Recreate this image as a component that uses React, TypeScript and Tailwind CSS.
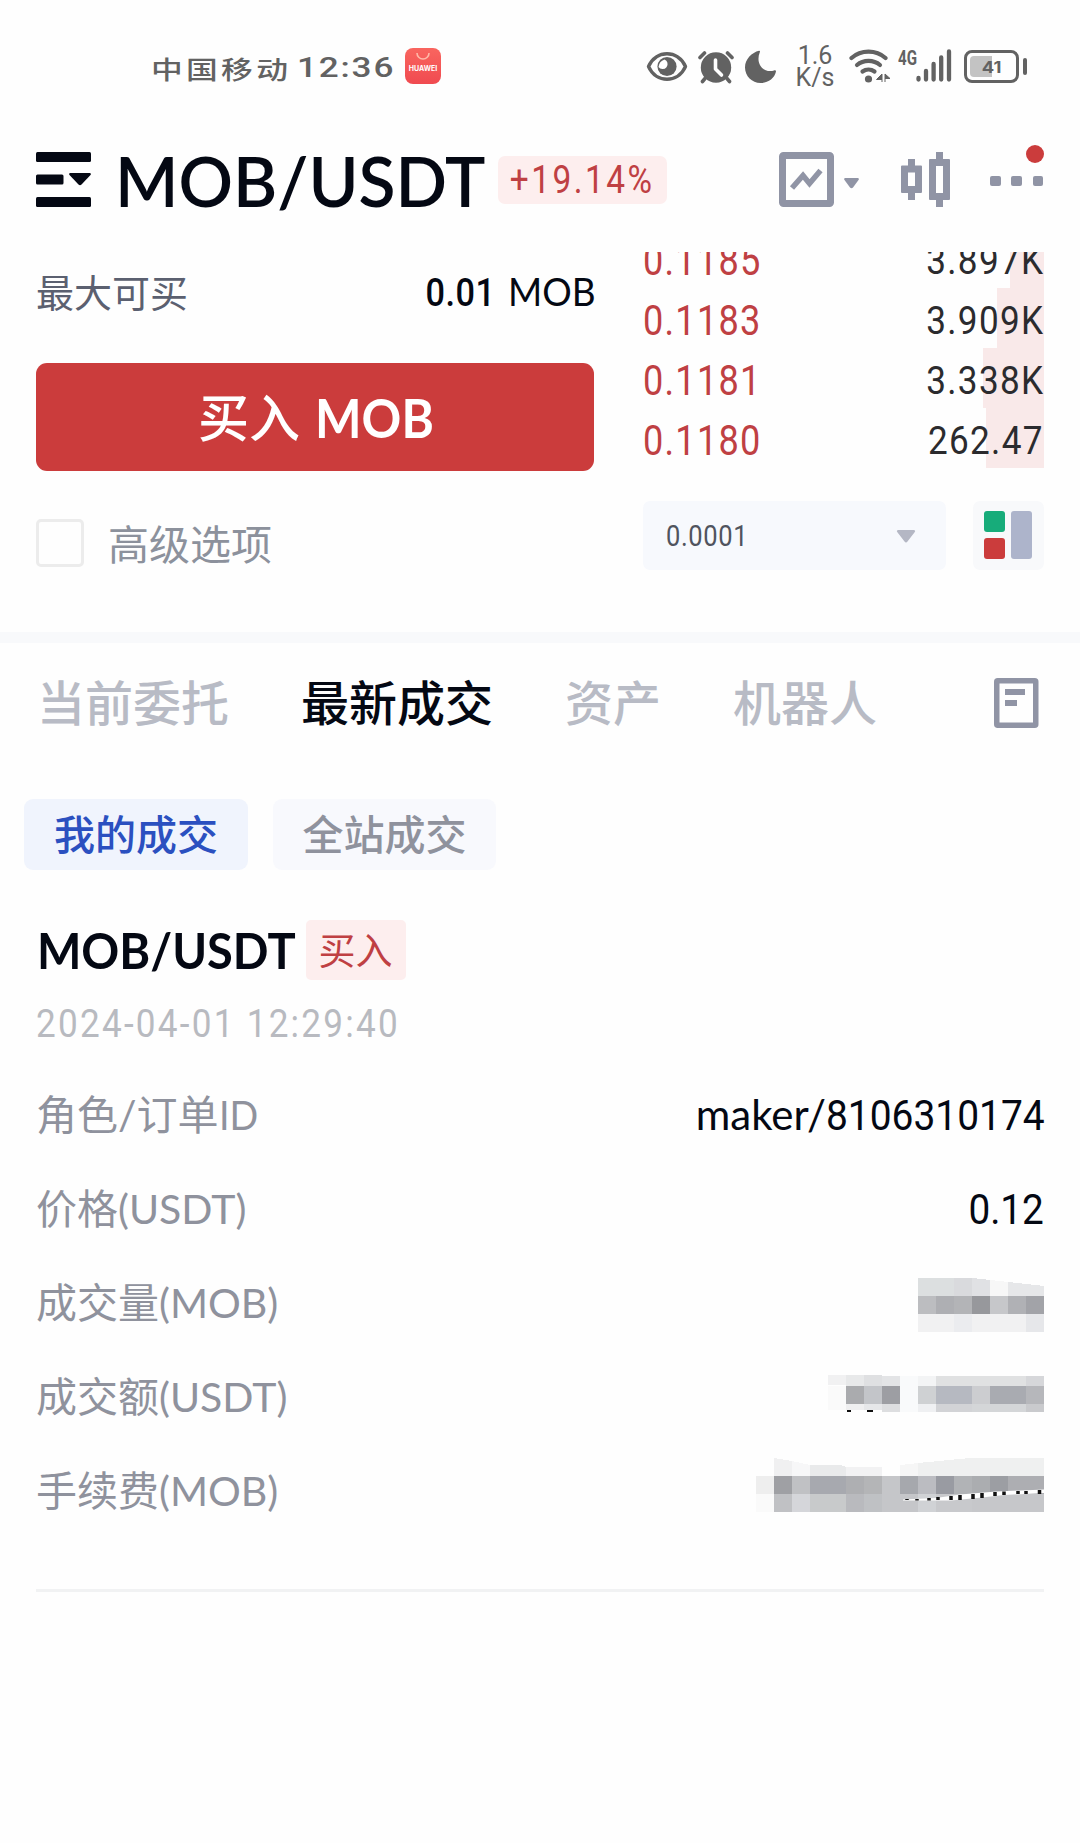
import React from "react";

const asks = [
  { price: "0.1185", amount: "3.897K", bar: "w-[34px]" },
  { price: "0.1183", amount: "3.909K", bar: "w-[47px]" },
  { price: "0.1181", amount: "3.338K", bar: "w-[61px]" },
  { price: "0.1180", amount: "262.47", bar: "w-[58px]" },
];

type Block = [x: number, y: number, w: number, h: number, fill: string];

// Pixelated cells that hide the three private amounts; x and y are inside a 306x94 row.
const volumeBlocks: Block[] = [
  [180, 40, 18, 18, "#bcbdc0"], [198, 40, 18, 18, "#aeafb3"], [216, 40, 18, 18, "#b3b4b7"],
  [234, 40, 18, 18, "#97989c"], [252, 40, 18, 18, "#c6c7ca"], [270, 40, 18, 18, "#b0b1b5"], [288, 40, 18, 18, "#a2a3a8"],
  [180, 58, 36, 18, "#f1f1f2"], [216, 58, 18, 18, "#ebecef"], [234, 58, 54, 18, "#f1f1f2"], [288, 58, 18, 18, "#e6e7ea"],
];
const turnoverBlocks: Block[] = [
  [90, 25, 18, 10, "#f1f1f2"], [108, 25, 18, 11, "#e8e9ea"], [126, 25, 18, 11, "#dfe0e2"], [144, 26, 18, 10, "#e3e4e6"],
  [108, 36, 18, 18, "#aaabae"], [126, 36, 18, 18, "#c3c5c9"], [144, 36, 18, 18, "#9d9ea3"],
  [90, 36, 18, 24, "#fafafa"], [108, 54, 18, 6, "#efeff0"], [126, 54, 18, 6, "#e6e7e9"], [144, 54, 18, 8, "#dddee0"],
  [162, 26, 18, 36, "#f9fafb"], [180, 26, 18, 10, "#f3f4f5"], [180, 36, 18, 18, "#cfd1d3"], [180, 54, 18, 8, "#eff0f2"],
  [198, 26, 90, 10, "#e0e1e2"], [288, 26, 18, 10, "#d6d7da"],
  [198, 36, 36, 18, "#b6b9c1"], [234, 36, 18, 18, "#cccdd0"], [252, 36, 36, 18, "#a9abb1"], [288, 36, 18, 18, "#b6b7bb"],
  [198, 54, 36, 8, "#d2d3d6"], [234, 54, 54, 8, "#d4d6d8"], [288, 54, 18, 8, "#c9cacd"],
];
const feeBlocks: Block[] = [
  [18, 32, 18, 18, "#eeeeee"], [36, 32, 18, 18, "#9fa0a4"], [54, 32, 18, 18, "#c0c1c4"], [72, 32, 36, 18, "#a7a9af"],
  [108, 32, 18, 18, "#aeafb2"], [126, 32, 18, 18, "#b4b5b7"], [144, 32, 18, 18, "#c5c6c9"], [162, 32, 18, 18, "#a6a8ad"],
  [180, 32, 18, 18, "#bbbcc1"], [198, 32, 18, 18, "#999ba2"], [216, 32, 18, 18, "#b1b3b6"], [234, 32, 18, 18, "#abadb0"],
  [252, 32, 18, 18, "#9c9ea3"], [270, 32, 36, 18, "#adaeb2"],
  [18, 50, 18, 18, "#fafafa"], [36, 50, 18, 18, "#c0c1c4"], [54, 50, 18, 18, "#d5d6da"], [72, 50, 36, 18, "#c8cacb"],
  [108, 50, 18, 18, "#b9babe"], [126, 50, 18, 18, "#bfc1c4"], [144, 50, 36, 18, "#c5c6c9"],
  [180, 50, 18, 18, "#d0d2d5"], [198, 50, 36, 18, "#c8c9cc"], [234, 50, 72, 18, "#c6c7ca"],
];

// Remains of the digits along the lower edge of the fee cells: centre x, top y, height.
const dashes = [
  [169, 55, 1], [179, 55, 1.5], [191, 54, 2.5], [200, 53, 3], [213, 52, 4], [222, 51, 5],
  [235, 50, 5], [244, 49, 5], [257, 48, 4], [266, 47.5, 3.5], [280, 47, 3], [288, 47, 3], [301.500, 46, 4],
];

function Mosaic({ blocks, children }: { blocks: Block[]; children?: React.ReactNode }) {
  return (
    <svg width="306" height="94" viewBox="0 0 306 94" shapeRendering="crispEdges">
      {blocks.map(([x, y, w, h, fill], i) => (
        <rect key={i} x={x} y={y} width={w} height={h} fill={fill} />
      ))}
      {children}
    </svg>
  );
}

function StatusBar() {
  return (
    <div className="flex h-[108px] items-start pt-[25px] pr-[53px] pl-[151px] text-[#626262]">
      <div className="flex h-[83px] w-full items-start">
        <div className="flex h-[83px] w-[254px] items-start">
          <span className="mt-[25px] w-[146px] origin-left scale-x-[1.27] text-[25px] leading-[38px] font-medium tracking-[2.600px] whitespace-nowrap">中国移动</span>
          <span className="mt-[24px] origin-left scale-x-[1.3] font-[Roboto] text-[27px] leading-[38px] font-medium tracking-[1.400px]">12:36</span>
        </div>
        <div className="mt-[23px] flex h-[36px] w-[36px] flex-col items-center rounded-[8px] bg-linear-to-b from-[#f9655f] to-[#f04a50]">
          <svg width="16" height="10" viewBox="0 0 16 10" className="mt-[4px]" fill="none" stroke="#ffb9a8" strokeWidth="1.6">
            <path d="M2 1a6 6 0 0 0 12 0" />
          </svg>
          <span className="font-[Inter] text-[7px] leading-[14px] font-bold text-white">HUAWEI</span>
        </div>
        <div className="ml-auto flex h-[83px] items-start">
          <svg width="42" height="33" viewBox="0 0 42 33" className="mt-[25px]">
            <path d="M2.500 16.500C10 -.5 32 -.5 39.500 16.500C32 33.500 10 33.500 2.500 16.500Z" fill="none" stroke="#626262" strokeWidth="3.400" strokeLinejoin="round" />
            <circle cx="21" cy="16.500" r="9.600" fill="#626262" />
            <path d="M18.500 9.500a5 5 0 1 1-6 7.500a9 9 0 0 1 6-7.500Z" fill="#fff" />
          </svg>
          <svg width="36" height="34" viewBox="0 0 36 34" className="mt-[25px] ml-[10px]">
            <circle cx="18" cy="17.500" r="15.200" fill="#626262" />
            <path d="M2 7.500L6.500 3M34 7.500L29.500 3" stroke="#626262" strokeWidth="3.600" strokeLinecap="round" />
            <path d="M7 28.500L4.500 31.500M29 28.500L31.500 31.500" stroke="#626262" strokeWidth="3.600" strokeLinecap="round" />
            <path d="M17.500 10V19L23.500 25" fill="none" stroke="#fff" strokeWidth="3.600" strokeLinecap="round" strokeLinejoin="round" />
          </svg>
          <svg width="32" height="34" viewBox="0 0 32 34" className="mt-[25px] ml-[11px]">
            <path d="M14 .8C7 2.500 0 9 0 17.500C0 26 7 33 15.500 33C23 33 29.500 28.500 31 21.500C31 20.500 30 20 29 20.500C19 23.500 10 14 14.800 2.300C15.200 1.300 15 .6 14 .8Z" fill="#626262" />
          </svg>
          <div className="mt-[20px] ml-[15px] flex w-[46px] flex-col items-center font-[Roboto] text-[25px] leading-[22px]">
            <span>1.6</span>
            <span>K/s</span>
          </div>
          <svg width="42" height="34" viewBox="0 0 42 34" className="mt-[24px] ml-[11px]">
            <g fill="none" stroke="#626262" strokeWidth="4.200" strokeLinecap="round">
              <path d="M2.500 9C12 .5 27 .5 36.500 9" />
              <path d="M8 16C14.500 10.500 24.500 10.500 31 16" />
              <path d="M13.500 22.500C17 20 22 20 25.500 22.500" />
            </g>
            <circle cx="19.500" cy="30" r="3.600" fill="#626262" />
            <path d="M33 25V33M33 25L27.500 30.500H33M36 33V25L41 29.500H36" fill="#626262" stroke="#626262" strokeWidth="1" />
          </svg>
          <span className="mt-[24px] ml-[7px] w-[18px] origin-left scale-x-[0.72] font-[Roboto] text-[21px] leading-[18px] font-bold">4G</span>
          <svg width="36" height="34" viewBox="0 0 36 34" className="mt-[24px]">
            <g stroke="#626262" strokeWidth="4.300" strokeLinecap="round">
              <path d="M2.500 29V30.500M10 22V30.500M17.600 15V30.500M25.200 8.500V30.500M33 2.500V30.500" />
            </g>
          </svg>
          <div className="mt-[25px] ml-[12px] flex items-center">
            <div className="relative flex h-[33px] w-[55px] items-center justify-center rounded-[8px] border-[3.500px] border-[#626262]">
              <div className="absolute top-[3px] bottom-[3px] left-[3px] w-[22px] rounded-l-[4px] bg-[#c3c3c3]" />
              <span className="relative scale-x-[1.15] font-[Inter] text-[16px] leading-none font-bold">41</span>
            </div>
            <div className="ml-[4px] h-[17px] w-[4px] rounded-full bg-[#626262]" />
          </div>
        </div>
      </div>
    </div>
  );
}

function Header() {
  return (
    <header className="flex h-[144px] items-center pr-[37px] pb-px pl-[36px]">
      <svg width="55" height="55" viewBox="0 0 55 55" fill="#040813">
        <rect width="55" height="10" rx="1.500" />
        <rect y="22.500" width="27.500" height="10" rx="1.500" />
        <rect y="45" width="55" height="10" rx="1.500" />
        <path d="M34 21H54Q55.500 21.500 54.500 23L45.500 32.500Q44 34 42.500 32.500L33.500 23Q32.500 21.500 34 21Z" />
      </svg>
      <h1 className="mt-[3px] ml-[24px] w-[383px] origin-left scale-x-[0.982] text-[69px] leading-[80px] font-semibold whitespace-nowrap text-[#040813]">MOB/USDT</h1>
      <div className="flex h-[48px] w-[169px] items-center justify-center rounded-[7px] bg-[#fdeeee] pt-px">
        <span className="scale-x-[0.88] font-[Roboto] text-[38px] leading-none tracking-[2.800px] text-[#bf4043]">+19.14%</span>
      </div>
      <svg width="80" height="55" viewBox="0 0 80 55" className="ml-auto">
        <rect x="3.500" y="3.500" width="48" height="48" rx="1" fill="none" stroke="#9094a5" strokeWidth="7" />
        <path d="M13 36L24 23.500L30.500 31.500L41.500 18.500" fill="none" stroke="#9094a5" strokeWidth="5.500" />
        <path d="M66 26H79Q80.500 26.500 79.500 28L74 35.500Q72.500 37 71 35.500L65.500 28Q64.500 26.500 66 26Z" fill="#9094a5" />
      </svg>
      <svg width="50" height="55" viewBox="0 0 50 55" className="ml-[42px]" fill="#9094a5">
        <path fillRule="evenodd" d="M7 7H14V13.500H20Q21 13.500 21 14.500V40Q21 41 20 41H14V48H7V41H1Q0 41 0 40V14.500Q0 13.500 1 13.500H7ZM7 20.500V34H14V20.500Z" />
        <path fillRule="evenodd" d="M35 0H42V7H48Q49 7 49 8V47Q49 48 48 48H42V55H35V48H29Q28 48 28 47V8Q28 7 29 7H35ZM35 14V41H42V14Z" />
      </svg>
      <div className="relative ml-[39px] flex h-[55px] w-[53px] items-center justify-between pt-[3px]">
        <span className="h-[10px] w-[10.500px] rounded-[2px] bg-[#9094a5]" />
        <span className="h-[10px] w-[10.500px] rounded-[2px] bg-[#9094a5]" />
        <span className="h-[10px] w-[10.500px] rounded-[2px] bg-[#9094a5]" />
        <span className="absolute -top-[7px] -right-px h-[18px] w-[18px] rounded-full bg-[#cb3c3c]" />
      </div>
    </header>
  );
}

function OrderSection() {
  return (
    <section className="flex h-[380px] justify-between px-[36px]">
      <div className="w-[558px]">
        <div className="flex h-[80px] items-center justify-between text-[38px] leading-none">
          <span className="text-[#5b6070]">最大可买</span>
          <span className="flex items-baseline text-[#040813]">
            <span className="origin-right scale-x-[0.88] font-[Roboto] text-[39px] font-medium tracking-[0.500px]">0.01</span>
            <span className="ml-[13px] w-[86px] origin-left scale-x-[0.97] text-[38px]">MOB</span>
          </span>
        </div>
        <button className="mt-[31px] flex h-[108px] w-full items-center justify-center gap-[19px] rounded-[11px] bg-[#cb3c3c] text-[51px] leading-none font-medium text-white">
          <span>买入</span>
          <span className="-ml-[4px] w-[117px] origin-left scale-x-[0.93] text-[53px] font-bold">MOB</span>
        </button>
        <div className="mt-[48px] flex h-[48px] items-center gap-[25px]">
          <span className="h-[48px] w-[48px] rounded-[5px] border-[3px] border-[#ececec]" />
          <span className="-ml-px pt-[2px] text-[41px] leading-none text-[#8c919c]">高级选项</span>
        </div>
      </div>
      <div className="w-[401px]">
        <div className="h-[216px] overflow-hidden">
          <div className="-mt-[24px]">
            {asks.map((row) => (
              <div key={row.price} className="relative flex h-[60px] items-center justify-between font-[Roboto]">
                <span className={`absolute right-0 h-[60px] bg-[#f9e9e9] ${row.bar}`} />
                <span className="origin-left scale-x-[0.84] pt-[4px] text-[43px] leading-none tracking-[1.500px] text-[#bf4043]">{row.price}</span>
                <span className="relative origin-right scale-x-[0.9] pt-[7px] text-[39px] leading-none tracking-[1.500px] text-[#2b2b2e]">{row.amount}</span>
              </div>
            ))}
          </div>
        </div>
        <div className="mt-[33px] flex h-[69px] justify-between">
          <div className="flex w-[303px] items-center justify-between rounded-[7px] bg-[#f7f9fd] pr-[30px] pl-[23px]">
            <span className="origin-left scale-x-[0.88] pt-[2px] font-[Roboto] text-[29px] leading-none tracking-[0.700px] text-[#50545e]">0.0001</span>
            <svg width="20" height="13" viewBox="0 0 20 13" className="mt-[2px]" fill="#b4b7c4">
              <path d="M2 0H18Q20 .6 18.600 2.200L11.500 11.500Q10 13.500 8.500 11.500L1.400 2.200Q0 .6 2 0Z" />
            </svg>
          </div>
          <div className="flex w-[71px] items-center justify-center gap-[6px] rounded-[7px] bg-[#f8f9fb] pr-[2px] pb-px">
            <div className="flex flex-col gap-[6px]">
              <span className="h-[21px] w-[21px] rounded-[3px] bg-[#17ac7a]" />
              <span className="h-[21px] w-[21px] rounded-[3px] bg-[#cb3c3c]" />
            </div>
            <span className="h-[48px] w-[21px] rounded-[3px] bg-[#adb4cb]" />
          </div>
        </div>
      </div>
    </section>
  );
}

function Tabs() {
  return (
    <nav className="flex h-[121px] items-center justify-between pr-[41px] pb-px pl-[37px]">
      <div className="flex gap-[72px] text-[48px] leading-none font-medium text-[#b8bbc5]">
        <span>当前委托</span>
        <span className="text-[#040813]">最新成交</span>
        <span>资产</span>
        <span>机器人</span>
      </div>
      <svg width="45" height="50" viewBox="0 0 45 50" className="-mt-px" fill="#9094a5">
        <rect x="2.750" y="2.750" width="39" height="44.500" rx="1" fill="none" stroke="#9094a5" strokeWidth="5.500" />
        <rect x="11" y="11" width="20" height="6" />
        <rect x="11" y="22" width="12" height="6" />
      </svg>
    </nav>
  );
}

function Row({ label, children }: { label: React.ReactNode; children: React.ReactNode }) {
  return (
    <div className="flex h-[94px] items-center justify-between">
      <span className="pb-[2px] text-[41px] leading-none text-[#8f929d]">{label}</span>
      {children}
    </div>
  );
}

function Trade() {
  return (
    <article className="mt-[50px] px-[36px]">
      <div className="flex h-[60px] items-center">
        <h2 className="w-[270px] origin-left scale-x-[0.94] pl-px text-[50px] leading-none font-bold whitespace-nowrap text-[#040813]">MOB/USDT</h2>
        <span className="flex h-[60px] w-[100px] items-center justify-center rounded-[5px] bg-[#fdeeee] pr-px text-[37px] leading-none text-[#bf4043]">买入</span>
      </div>
      <div className="flex h-[88px] items-center">
        <span className="origin-left scale-x-[0.9] font-[Roboto] text-[39px] leading-none tracking-[2.500px] whitespace-nowrap text-[#b8bac0]">2024-04-01 12:29:40</span>
      </div>
      <Row label={<>角色/订单<span className="inline-block w-[44px] origin-left scale-x-[0.92]">ID</span></>}>
        <span className="flex items-baseline text-[#040813]">
          <span className="text-[42px] leading-none">maker/</span>
          <span className="w-[218px] font-[Roboto] text-[43px] leading-none">
            <span className="inline-block origin-left scale-x-[0.905]">8106310174</span>
          </span>
        </span>
      </Row>
      <Row label="价格(USDT)">
        <span className="origin-right scale-x-[0.9] font-[Roboto] text-[43px] leading-none text-[#040813]">0.12</span>
      </Row>
      <Row label="成交量(MOB)">
        <Mosaic blocks={volumeBlocks}>
          <path d="M180 22H230L252 24V40H180Z" fill="#dcdfe0" />
          <path d="M216 22H228L252 24V40H216Z" fill="#d9dadd" />
          <path d="M234 22L252 24V40H234Z" fill="#e0e1e4" />
          <path d="M252 24L270 26V40H252Z" fill="#f7f7f7" />
          <path d="M270 26L306 30V40H270Z" fill="#e6e7e9" />
        </Mosaic>
      </Row>
      <Row label="成交额(USDT)">
        <Mosaic blocks={turnoverBlocks}>
          <path d="M109 60h4v2h-4zM129 60h6v2h-6z" fill="#111" />
        </Mosaic>
      </Row>
      <Row label="手续费(MOB)">
        <Mosaic blocks={feeBlocks}>
          <path d="M36 14L54 17V32H36Z" fill="#f0f0f1" />
          <path d="M54 17L72 21V32H54Z" fill="#f7f7f8" />
          <path d="M72 21H103L108 23V32H72Z" fill="#e9eaeb" />
          <path d="M108 23H144V32H108Z" fill="#f2f2f3" />
          <path d="M162 21L180 19V32H162Z" fill="#f6f6f6" />
          <path d="M180 19L232 14H306V32H180Z" fill="#eff0f0" />
          <g shapeRendering="auto">
            <path d="M165 55.500L198 54L222 50.500L258 47.500L306 45.500V49L266 51L244 53.500L213 56.500L165 56.500Z" fill="#fff" />
            {dashes.map(([x, y, h]) => (
              <rect key={x} x={x - 1.75} y={y} width="3.500" height={h} fill="#111" />
            ))}
          </g>
        </Mosaic>
      </Row>
      <hr className="mt-[51px] border-t-[3px] border-[#f1f2f3]" />
    </article>
  );
}

export default function App() {
  return (
    <main className="h-[1843px] w-[1080px] overflow-hidden bg-[#fefefe] font-[Lato,'Noto_Sans_CJK_SC',sans-serif]">
      <StatusBar />
      <Header />
      <OrderSection />
      <div className="h-[11px] bg-[#f8f9fb]" />
      <Tabs />
      <div className="mt-[35px] flex gap-[25px] pl-[24px] text-[41px] leading-none font-medium">
        <span className="flex h-[71px] w-[224px] items-center justify-center rounded-[9px] bg-[#f0f4fd] text-[#2b50c0]">我的成交</span>
        <span className="flex h-[71px] w-[223px] items-center justify-center rounded-[9px] bg-[#f8f9fd] text-[#8f929d]">全站成交</span>
      </div>
      <Trade />
    </main>
  );
}
